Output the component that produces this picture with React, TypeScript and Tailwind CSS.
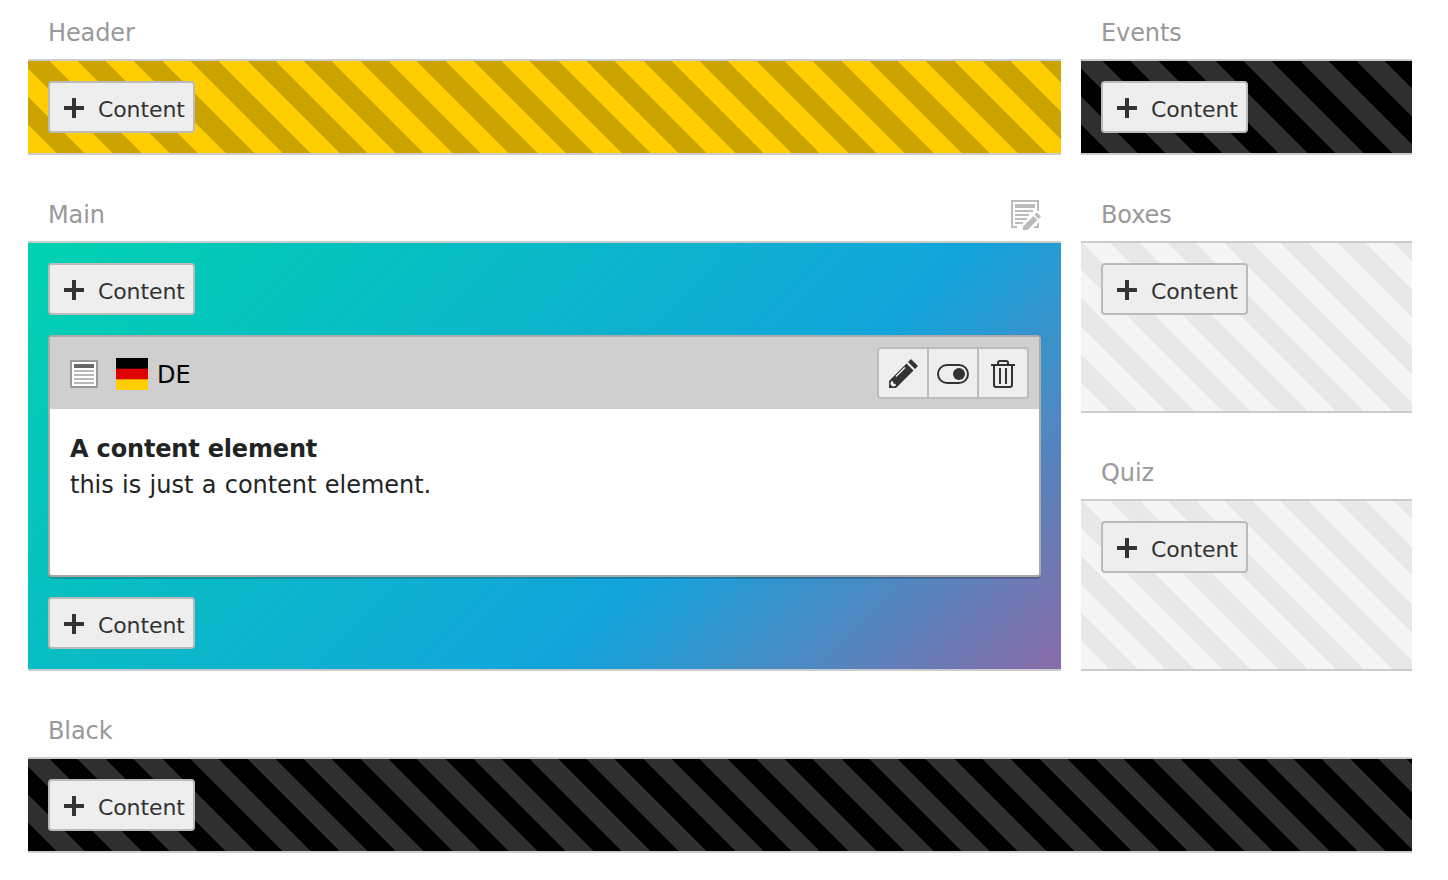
import type { ReactNode } from "react";

const stripes = {
  yellow: "bg-[repeating-linear-gradient(45deg,#ffcd00_0_20px,#cca400_20px_40px)]",
  black: "bg-[repeating-linear-gradient(45deg,#000_0_20px,#2f2f2f_20px_40px)]",
  light: "bg-[repeating-linear-gradient(45deg,#f5f5f5_0_20px,#e8e8e8_20px_40px)]",
  gradient: "bg-[linear-gradient(135deg,#00d2b0_0%,#12a4db_65%,#8a6ca9_100%)]",
};

function AddContent() {
  return (
    <button className="flex h-[52px] w-[147px] shrink-0 items-center rounded border-2 border-[#bbb] bg-[#eee] pt-0.5 pl-3.5 text-[#333]">
      <svg className="mr-3.5 size-5 shrink-0" viewBox="0 0 20 20" fill="currentColor">
        <path d="M8.5 0h3a.5.5 0 0 1 .5.5V8h7.500a.5.5 0 0 1 .5.5v3a.5.5 0 0 1-.5.5H12v7.500a.5.5 0 0 1-.5.5h-3a.5.5 0 0 1-.5-.5V12H.5a.5.5 0 0 1-.5-.5v-3A.5.5 0 0 1 .5 8H8V.5a.5.5 0 0 1 .5-.5z" />
      </svg>
      <span className="pt-1 text-[22px] leading-7 tracking-[-0.1px]">Content</span>
    </button>
  );
}

type ColumnProps = {
  title: string;
  tone: keyof typeof stripes;
  action?: ReactNode;
  first?: boolean;
  className?: string;
  children?: ReactNode;
};

function Column({ title, tone, action, first, className = "", children }: ColumnProps) {
  return (
    <section className={`flex flex-col ${className}`}>
      <header className={`flex shrink-0 items-end justify-between px-5 ${first ? "h-[59px]" : "h-[86px]"}`}>
        <h2 className="pb-[11px] text-2xl leading-[30px] tracking-[-0.1px] text-[#999]">{title}</h2>
        {action}
      </header>
      <div className={`flex grow flex-col items-start gap-5 border-y-2 border-[#ccc] p-5 ${stripes[tone]}`}>
        <AddContent />
        {children}
      </div>
    </section>
  );
}

function EditPageIcon() {
  return (
    <svg className="mb-[11px] size-8 shrink-0" viewBox="0 0 32 32" fill="#bbb">
      <path d="M2 2h28v11h-2V4H4v24h4v2H2z" />
      <path d="M6 6h20v4H6zM6 12h18v2H6zM6 16h14v2H6zM6 20h12v2H6zM6 24h8v2H6z" />
      <path d="M28 26l2-2v6h-6l2-2h2z" />
      <path d="M14 28.500 24.500 18l4 4-10 10H14z" />
      <path d="m25.500 17 2-2q.5-.5 1 0l3 3q.5.5 0 1l-2 2z" />
    </svg>
  );
}

function TextIcon() {
  return (
    <svg className="size-7" viewBox="0 0 28 28">
      <path fill="#fff" stroke="#999" strokeWidth="2" d="M1 1h26v26H1z" />
      <path fill="#666" d="M4 4h20v4H4z" />
      <path fill="#b9b9b9" d="M4 10h20v2H4zM4 14h20v2H4zM4 18h20v2H4zM4 22h20v2H4z" />
    </svg>
  );
}

function GermanFlag() {
  return (
    <svg className="ml-[18px] size-8" viewBox="0 0 32 32">
      <path d="M0 0h32v11H0z" />
      <path fill="#e00000" d="M0 10.700h32V22H0z" />
      <path fill="#ffce00" d="M0 21.300h32V32H0z" />
    </svg>
  );
}

function ToolButton({ label, className, children }: { label: string; className: string; children: ReactNode }) {
  return (
    <button
      aria-label={label}
      className={`flex h-[52px] w-[52px] items-center justify-center border-2 border-[#bbb] bg-[#eee] pt-0.5 text-[#333] ${className}`}
    >
      <svg className="size-8" viewBox="0 0 32 32" fill="none">
        {children}
      </svg>
    </button>
  );
}

function Toolbar() {
  return (
    <div className="flex">
      <ToolButton label="Edit" className="rounded-l">
        <path fill="currentColor" d="M2 30v-7L19.500 5.500l7 7L9 30z" />
        <path stroke="#eee" strokeWidth="1.400" d="M9 18.500 18 9.500" />
        <path fill="#eee" d="M4.500 23 6 23.500l.5 2 2 .5.5 1.500-2 1H5.500l-2-2v-2z" />
        <path fill="currentColor" d="m21 4 2.300-2.300q.7-.7 1.400 0l5.600 5.600q.7.7 0 1.400L28 11z" />
      </ToolButton>
      <ToolButton label="Toggle visibility" className="-ml-0.5">
        <rect x="1" y="7" width="30" height="18" rx="9" stroke="currentColor" strokeWidth="2" />
        <circle cx="22" cy="16" r="6" fill="currentColor" />
      </ToolButton>
      <ToolButton label="Delete" className="-ml-0.5 rounded-r">
        <path
          stroke="currentColor"
          strokeWidth="2"
          d="M4 7h24M11 7V5q0-2 2-2h6q2 0 2 2v2M7 7v20q0 2 2 2h14q2 0 2-2V7M13 10v16M19 10v16"
        />
      </ToolButton>
    </div>
  );
}

function ContentCard() {
  return (
    <article className="flex h-[242px] w-full shrink-0 flex-col rounded border-2 border-[#aaa] bg-white shadow-[0_3px_0_-1px_rgba(0,0,0,0.2)]">
      <div className="flex h-[72px] shrink-0 justify-between rounded-t-[2px] bg-[#cfcfcf] pt-2.5 pr-2.5 pl-5">
        <div className="flex h-[54px] items-center">
          <TextIcon />
          <GermanFlag />
          <span className="ml-[9px] pt-0.5 text-2xl text-black">DE</span>
        </div>
        <Toolbar />
      </div>
      <div className="px-5 pt-[22px] text-2xl leading-9 text-[#212424]">
        <strong className="block font-bold tracking-[-0.17px]">A content element</strong>
        <p className="tracking-[-0.03px] [word-spacing:0.8px]">this is just a content element.</p>
      </div>
    </article>
  );
}

export default function App() {
  return (
    <main className="h-[880px] w-[1448px] overflow-hidden bg-white pr-9 pl-7 font-['DejaVu_Sans',Verdana,sans-serif]">
      <div className="grid grid-cols-[1033px_331px] gap-x-5">
        <Column title="Header" tone="yellow" first />
        <Column title="Events" tone="black" first />
        <Column title="Main" tone="gradient" action={<EditPageIcon />}>
          <ContentCard />
          <AddContent />
        </Column>
        <div className="flex flex-col">
          <Column title="Boxes" tone="light" className="flex-1" />
          <Column title="Quiz" tone="light" className="flex-1" />
        </div>
        <Column title="Black" tone="black" className="col-span-2" />
      </div>
    </main>
  );
}
